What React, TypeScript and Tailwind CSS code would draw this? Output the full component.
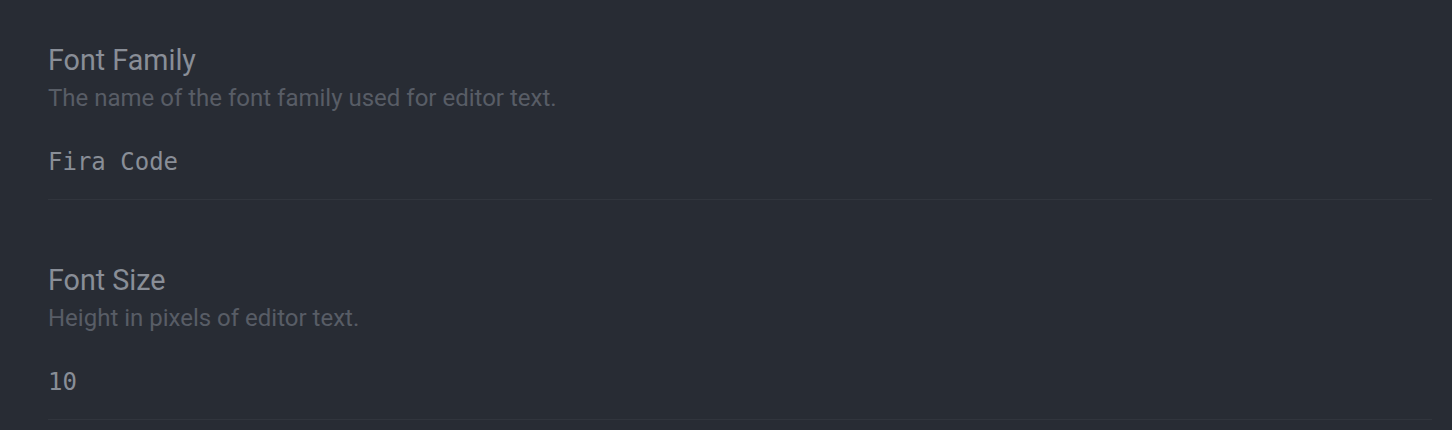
import React from 'react';

type Setting = { title: string; description: string; value: string };

const settings: Setting[] = [
  { title: 'Font Family', description: 'The name of the font family used for editor text.', value: 'Fira Code' },
  { title: 'Font Size', description: 'Height in pixels of editor text.', value: '10' },
];

const SettingRow: React.FC<{ setting: Setting }> = ({ setting }) => (
  <div className="pt-[62px] first:pt-[42px] pb-[20px] border-b border-[#31353d]">
    <div className="text-[28.7px] leading-[36px] text-[#898e97]">{setting.title}</div>
    <div className="text-[24px] leading-[30px] text-[#585d66] mt-[5px]">{setting.description}</div>
    <div className="mt-[32px] font-['DejaVu_Sans_Mono',monospace] text-[24px] leading-[34px] text-[#898e97]">
      {setting.value}
    </div>
  </div>
);

export default function App() {
  return (
    <div className="min-h-screen h-[430px] bg-[#282c34] pl-[48px] pr-[20px] font-['Roboto',sans-serif] overflow-hidden">
      {settings.map((s) => (
        <SettingRow key={s.title} setting={s} />
      ))}
    </div>
  );
}
